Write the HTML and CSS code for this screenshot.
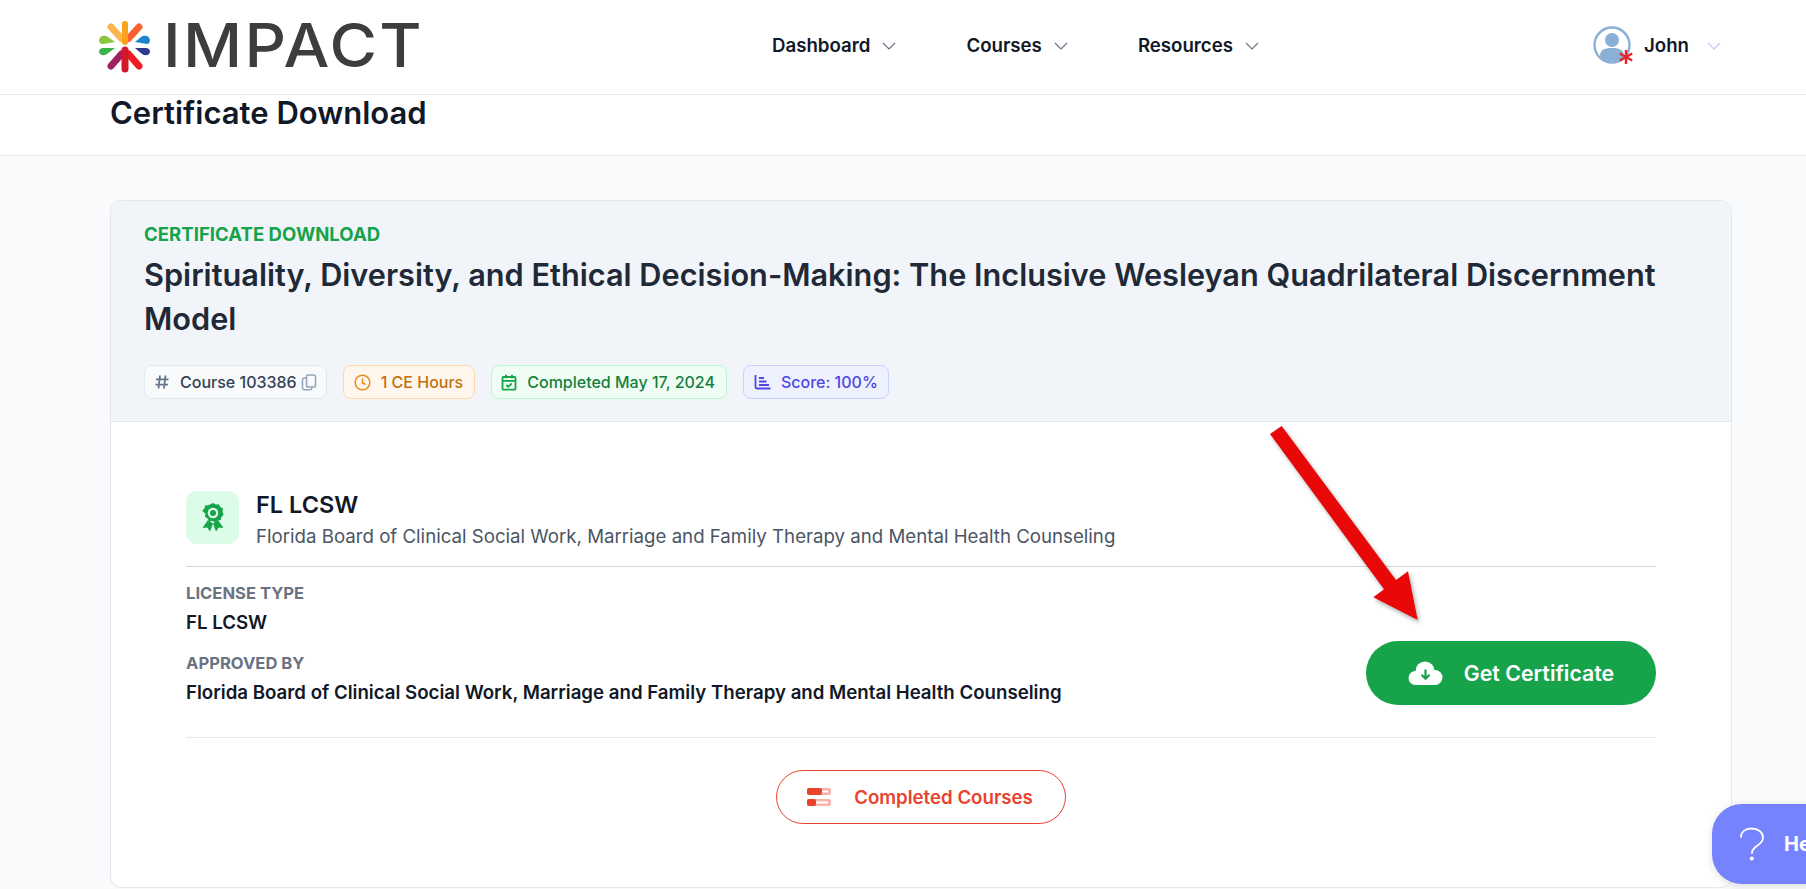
FILE: index.html
```html
<!DOCTYPE html>
<html lang="en">
<head>
<meta charset="utf-8">
<title>Certificate Download</title>
<link rel="stylesheet" href="styles.css">
</head>
<body>
<header class="topbar">
  <a class="logo">
    <svg class="logo-mark" width="52" height="52" viewBox="0 0 52 52">
      <g stroke-linecap="round" fill="none" stroke-width="6">
        <path d="M12 6 L22.5 17.5" stroke="#fdb54e" stroke-width="7"/>
        <path d="M40 6 L29.5 17.5" stroke="#f9622f" stroke-width="7"/>
        <path d="M26 3 L26 21" stroke="#faa21b"/>
        <path d="M12 45 L22.5 33" stroke="#a0215f" stroke-width="7"/>
        <path d="M40 45 L29.5 33" stroke="#ed1c24" stroke-width="7"/>
        <path d="M26 29 L26 48" stroke="#d2182a" stroke-width="7"/>
      </g>
      <path d="M0 19 C1 14 6 14 9 16 L16 21 L4 23 C1 23 0 21 0 19Z" fill="#8cc63f"/>
      <path d="M0 31 C0 28 2 27 4 27 L16 27 L8 33 C5 35 1 35 0 31Z" fill="#39b54a"/>
      <path d="M51 19 C50 14 45 14 42 16 L36 21 L48 23 C50 23 51 21 51 19Z" fill="#1b87c9"/>
      <path d="M51 31 C51 28 49 27 47 27 L36 27 L43 33 C46 35 50 35 51 31Z" fill="#2b3990"/>
    </svg>
    <span class="logo-text">IMPACT</span>
  </a>
  <nav class="nav">
    <a class="nav-item">Dashboard <svg class="chev" width="14" height="8" viewBox="0 0 14 8"><path d="M1 1l6 6 6-6"/></svg></a>
    <a class="nav-item">Courses <svg class="chev" width="14" height="8" viewBox="0 0 14 8"><path d="M1 1l6 6 6-6"/></svg></a>
    <a class="nav-item">Resources <svg class="chev" width="14" height="8" viewBox="0 0 14 8"><path d="M1 1l6 6 6-6"/></svg></a>
  </nav>
  <div class="user">
    <svg class="avatar" width="42" height="42" viewBox="0 0 42 42">
      <circle cx="19" cy="19" r="17.5" fill="#fff" stroke="#8ab0d6" stroke-width="2.4"/>
      <circle cx="19" cy="14" r="7" fill="#8ab0d6"/>
      <path d="M7 30 C7 24 11 22 19 22 C27 22 31 24 31 30 C28 34 24 35.5 19 35.5 C14 35.5 10 34 7 30Z" fill="#8ab0d6"/>
      <path d="M33 24v14M26.8 27.5l12.4 7M39.2 27.5l-12.4 7" stroke="#e5242b" stroke-width="2.4" fill="none"/>
    </svg>
    <span class="user-name">John</span>
    <svg class="chev chev-light" width="14" height="8" viewBox="0 0 14 8"><path d="M1 1l6 6 6-6"/></svg>
  </div>
</header>

<section class="page-title">
  <h1>Certificate Download</h1>
</section>

<main class="content">
  <article class="card">
    <div class="card-head">
      <div class="eyebrow">CERTIFICATE DOWNLOAD</div>
      <h2 class="course-title">Spirituality, Diversity, and Ethical Decision-Making: The Inclusive Wesleyan Quadrilateral Discernment Model</h2>
      <div class="badges">
        <span class="badge badge-gray">
          <svg width="16" height="16" viewBox="0 0 16 16" class="ic ic-hash"><path d="M6 1.500L4.500 14.500M11.500 1.500L10 14.500M2 5.300h12.500M1.500 10.700h12.500"/></svg>
          <span class="badge-text">Course 103386</span>
          <svg width="16" height="17" viewBox="0 0 16 17" class="ic ic-copy"><rect x="5.500" y="1" width="9" height="12" rx="1.800"/><path d="M5 4H3.500A1.800 1.800 0 0 0 1.500 5.800V14a1.800 1.800 0 0 0 1.800 1.800H9a1.800 1.800 0 0 0 1.800-1.800v-.5"/></svg>
        </span>
        <span class="badge badge-orange">
          <svg width="17" height="17" viewBox="0 0 17 17" class="ic"><circle cx="8.500" cy="8.500" r="7.300"/><path d="M8.500 4.500v4.500l3 1.500"/></svg>
          <span class="badge-text">1 CE Hours</span>
        </span>
        <span class="badge badge-green">
          <svg width="16" height="17" viewBox="0 0 16 17" class="ic ic-strong"><rect x="1.500" y="3" width="13" height="12.700" rx="1"/><path d="M1.500 6.800h13M5 .8v3.500M11 .8v3.500M5.300 11l1.900 1.800 3.500-3.300"/></svg>
          <span class="badge-text">Completed May 17, 2024</span>
        </span>
        <span class="badge badge-indigo">
          <svg width="17" height="16" viewBox="0 0 17 16" class="ic ic-strong"><path d="M1.500 1V13a1.500 1.500 0 0 0 1.500 1.500H16.500M5 4h5M5 7.500h7.500M5 11h10"/></svg>
          <span class="badge-text">Score: 100%</span>
        </span>
      </div>
    </div>

    <div class="card-body">
      <div class="license-head">
        <div class="license-icon">
          <svg width="22" height="29" viewBox="0 0 22 29">
            <path d="M6 17L.5 25l4.700-.4L8 28.500l3-8zM16 17l5.500 8-4.700-.4L14 28.500l-3-8z" fill="#16a34a"/>
            <path d="M11 0l2.800 1.500 3.100-.3 1.300 2.900 2.800 1.500-.5 3.100 1.100 3-2.200 2.200-.7 3-3.100.5-2.500 1.900-2.800-1.400-3.100.3-1.500-2.800-2.700-1.600.4-3.100L.2 7.800l2.200-2.200.7-3 3.100-.4z" fill="#16a34a"/>
            <circle cx="11" cy="10" r="5.300" fill="#dcfce7"/>
            <circle cx="11" cy="10" r="3" fill="#16a34a"/>
          </svg>
        </div>
        <div class="license-names">
          <div class="license-name">FL LCSW</div>
          <div class="license-board">Florida Board of Clinical Social Work, Marriage and Family Therapy and Mental Health Counseling</div>
        </div>
      </div>

      <div class="license-row">
        <dl class="facts">
          <dt>LICENSE TYPE</dt>
          <dd>FL LCSW</dd>
          <dt>APPROVED BY</dt>
          <dd>Florida Board of Clinical Social Work, Marriage and Family Therapy and Mental Health Counseling</dd>
        </dl>
        <a class="btn-cert">
          <svg width="35" height="25" viewBox="0 0 35 25">
            <g fill="#fff"><circle cx="7.500" cy="17" r="7"/><circle cx="17" cy="10" r="9.500"/><circle cx="27" cy="16.500" r="7.500"/><rect x="7.500" y="14" width="19.500" height="10"/></g>
            <path d="M17.500 8.500v9M13.500 13.800l4 4 4-4" fill="none" stroke="#16a34a" stroke-width="2.200"/>
          </svg>
          <span>Get Certificate</span>
        </a>
      </div>

      <div class="actions">
        <a class="btn-courses">
          <svg width="24" height="18" viewBox="0 0 24 18">
            <rect x="0" y="0" width="24" height="7" rx="2" fill="#f8b4ab"/>
            <rect x="0" y="0" width="15" height="7" rx="2" fill="#e8432c"/>
            <rect x="15" y="2.500" width="6" height="2" fill="#fff"/>
            <rect x="0" y="11" width="24" height="7" rx="2" fill="#f8b4ab"/>
            <rect x="0" y="11" width="9" height="7" rx="2" fill="#e8432c"/>
            <rect x="9" y="13.500" width="12" height="2" fill="#fff"/>
          </svg>
          <span>Completed Courses</span>
        </a>
      </div>
    </div>
  </article>
</main>

<svg class="arrow" width="170" height="210" viewBox="0 0 170 210">
  <polygon points="10,24 21.700,16 136,170 148,161.300 157.700,210 113.300,187.300 124,179.300" fill="#e90808"/>
</svg>

<a class="help">
  <svg width="26" height="34" viewBox="0 0 26 34"><path d="M2 10C2 5 6 1.500 12.500 1.500 19 1.500 24 5 24 10.500c0 4-2.500 6-5.500 8-3 2-5.500 4-5.500 7.500" fill="none" stroke="#fff" stroke-width="1.800" stroke-linecap="round"/><circle cx="12.800" cy="31.500" r="2" fill="#fff"/></svg>
  <span>Help</span>
</a>
</body>
</html>
```

FILE: styles.css
```css
* { box-sizing: border-box; }
html, body { margin: 0; height: 100%; }
body {
  height: 889px;
  overflow: hidden;
  background: #f9fafb;
  font-family: Inter, "Liberation Sans", sans-serif;
  color: #111827;
  position: relative;
}
.topbar {
  height: 95px;
  background: #fff;
  border-bottom: 1px solid #e5e7eb;
  display: grid;
  grid-template-columns: 673px 821px 1fr;
  padding: 0 0 4px 99px;
  align-items: center;
}
.logo { display: flex; align-items: center; gap: 12px; }
.logo-mark { flex: none; margin-top: 3px; }
.logo-text {
  font-family: Inter, sans-serif;
  font-size: 60px;
  line-height: 1;
  letter-spacing: 2.200px;
  color: #3d3d3d;
  font-weight: 500;
  transform: scaleX(1.08);
  transform-origin: left center;
}
.nav { display: flex; gap: 70px; }
.nav-item {
  display: flex;
  align-items: center;
  gap: 12px;
  font-size: 18.670px;
  font-weight: 600;
  color: #111827;
}
.chev { fill: none; stroke: #6b7280; stroke-width: 1.200; margin-top: 2px; }
.chev-light { stroke: #c7d2fe; stroke-width: 1.500; margin-left: 9px; }
.avatar { margin-top: 4px; }
.user { display: flex; align-items: center; gap: 9px; font-size: 18.670px; font-weight: 600; }

.page-title {
  height: 61px;
  background: #fff;
  border-bottom: 1px solid #e5e7eb;
  padding-left: 110px;
}
.page-title h1 {
  margin: 0;
  font-size: 31px;
  line-height: 36px;
  font-weight: 600;
  color: #111827;
}

.content { padding: 44px 74px 0 110px; }
.card {
  background: #fff;
  border: 1px solid #e5e7eb;
  border-radius: 11px;
  height: 688px;
  overflow: hidden;
}
.card-head {
  background: #f1f5f9;
  border-bottom: 1px solid #e5e7eb;
  padding: 21px 33px 0;
  height: 221px;
}
.eyebrow { font-size: 18.600px; line-height: 24px; font-weight: 650; color: #16a34a; }
.course-title {
  margin: 7px 0 0;
  font-size: 30.700px;
  line-height: 44px;
  font-weight: 600;
  color: #1f2937;
}
.badges { display: flex; gap: 16px; margin-top: 24px; }
.badge {
  height: 34px;
  display: inline-flex;
  align-items: center;
  gap: 10px;
  padding: 0 11px 0 10px;
  border: 1px solid;
  border-radius: 8px;
  font-size: 16px;
  font-weight: 500;
}
.ic { fill: none; stroke: currentColor; stroke-width: 1.500; flex: none; }
.ic-strong { stroke-width: 1.800; }
.ic-hash { stroke-width: 1.800; }
.badge-gray { background: #f8fafc; border-color: #e2e8f0; color: #334155; padding: 0 9px 0 9px; }
.badge-gray > .ic:first-child { color: #64748b; }
.ic-copy { color: #94a3b8; margin-left: -6px; }
.badge-orange { background: #fff7ed; border-color: #fed7aa; color: #c2710f; }
.badge-orange .ic { color: #ea8a1a; }
.badge-green { background: #f0fdf4; border-color: #bbf7d0; color: #15803d; padding: 0 11px 0 9px; }
.badge-green .ic { color: #16a34a; }
.badge-indigo { background: #eef2ff; border-color: #c7d2fe; color: #4f46e5; padding-right: 10px; }
.badge-indigo .ic { color: #4f46e5; }

.card-body { padding: 69px 75px 0; }
.license-head {
  display: flex;
  gap: 17px;
  height: 76px;
  border-bottom: 1px solid #d1d5db;
}
.license-icon {
  width: 53px;
  height: 53px;
  border-radius: 11px;
  background: #dcfce7;
  display: flex;
  align-items: center;
  justify-content: center;
}
.license-name { font-size: 23.500px; line-height: 28px; font-weight: 600; color: #111827; }
.license-board { font-size: 18.670px; line-height: 26px; margin-top: 5px; color: #4b5563; }
.license-row {
  display: flex;
  justify-content: space-between;
  align-items: flex-start;
  height: 171px;
  border-bottom: 1px solid #e5e7eb;
}
.facts { margin: 16px 0 0; }
.facts dt { font-size: 16.600px; line-height: 20px; font-weight: 650; color: #6b7280; margin: 0 0 8px; }
.facts dd { font-size: 18.670px; line-height: 24px; font-weight: 600; color: #111827; margin: 0 0 18px; }
.btn-cert {
  margin-top: 74px;
  width: 290px;
  height: 64px;
  border-radius: 32px;
  background: #16a34a;
  color: #fff;
  display: flex;
  align-items: center;
  justify-content: center;
  gap: 21px;
  font-size: 21.300px;
  font-weight: 600;
}
.actions { display: flex; justify-content: center; padding-top: 32px; }
.btn-courses {
  width: 290px;
  height: 54px;
  border: 1px solid #e8432c;
  border-radius: 27px;
  display: flex;
  align-items: center;
  justify-content: center;
  gap: 23px;
  padding-right: 2px;
  color: #e8432c;
  font-size: 18.670px;
  font-weight: 600;
}

.arrow {
  position: absolute;
  left: 1260px;
  top: 410px;
  filter: drop-shadow(2px 3px 2px rgba(0,0,0,.3));
}
.help {
  position: absolute;
  left: 1712px;
  top: 804px;
  width: 160px;
  height: 80px;
  border-radius: 30px;
  background: #7583ff;
  color: #fff;
  display: flex;
  align-items: center;
  gap: 19px;
  padding-left: 27px;
  font-size: 20px;
  font-weight: 700;
  box-shadow: 0 2px 8px rgba(0,0,0,.12);
}
```
